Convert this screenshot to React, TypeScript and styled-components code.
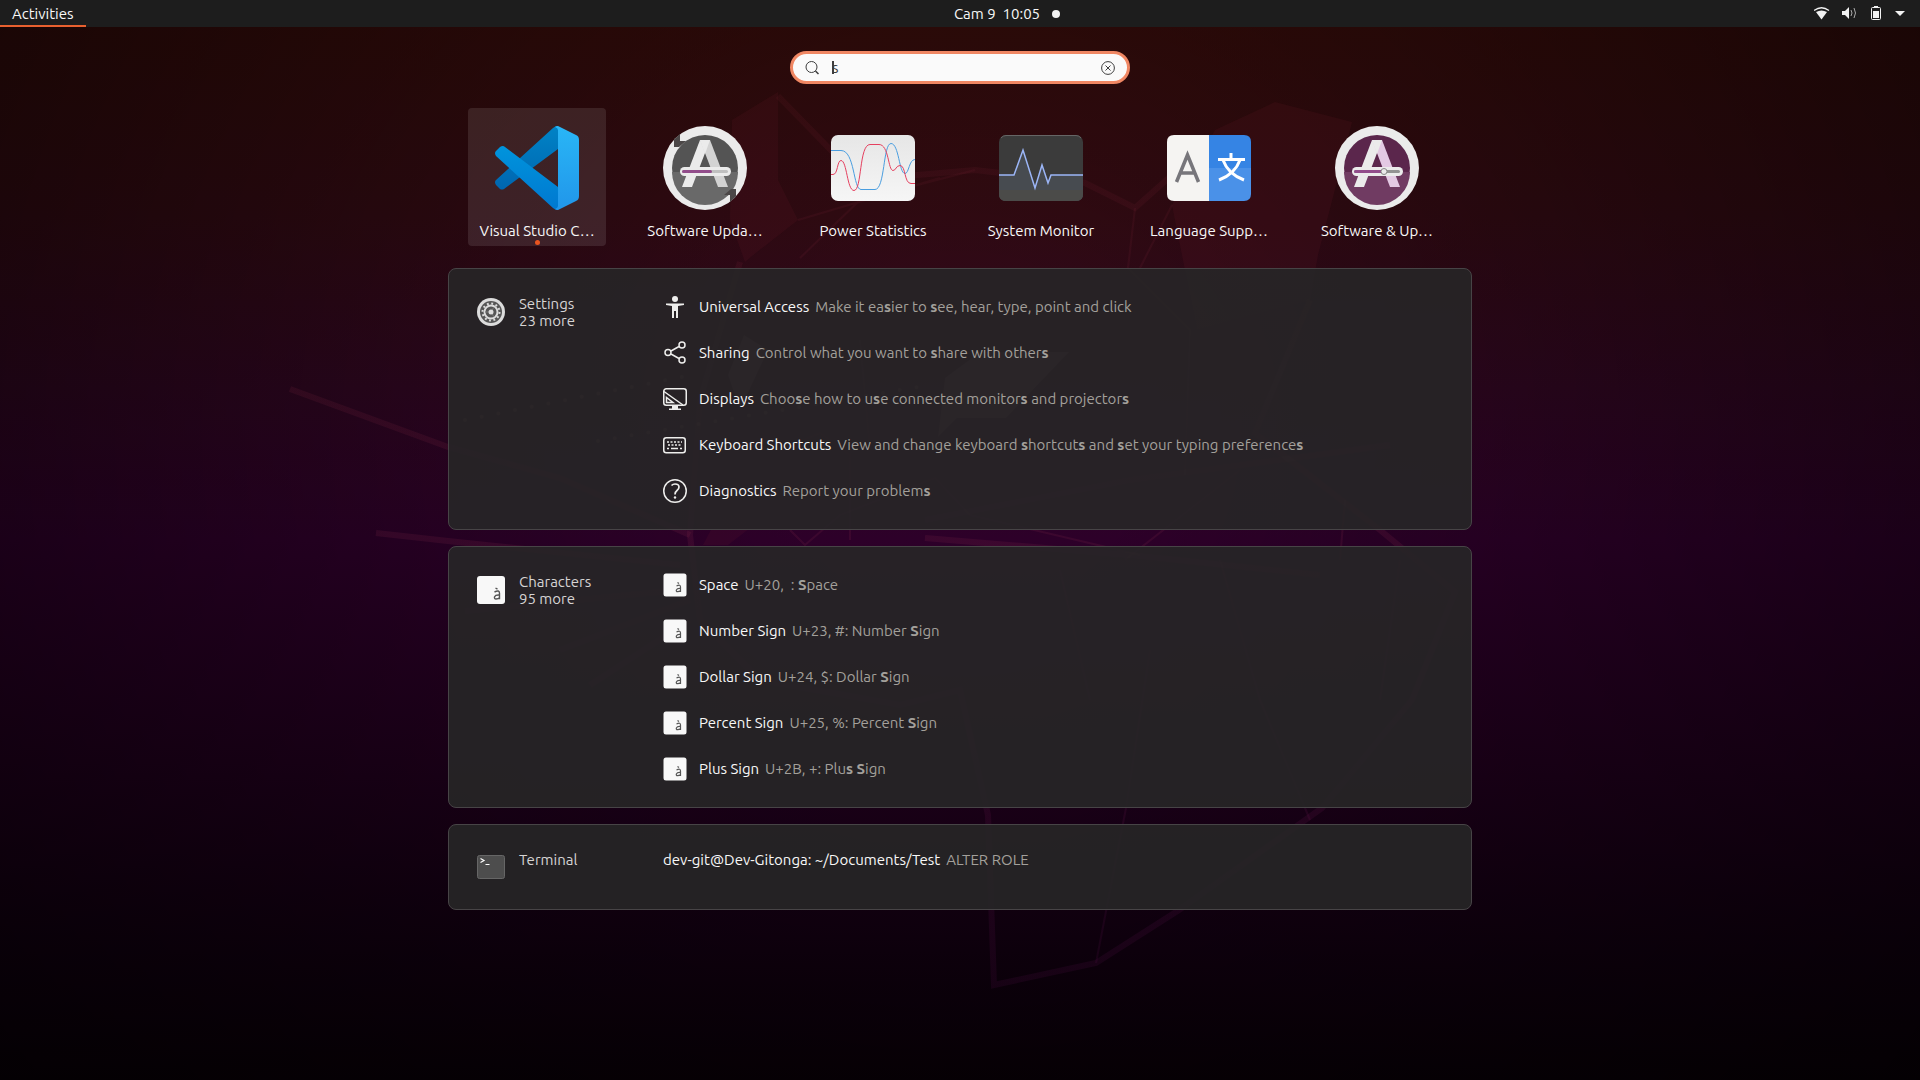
import React, { useState } from "react";
import styled, { createGlobalStyle } from "styled-components";

const Global = createGlobalStyle`
  * { box-sizing: border-box; }
  html, body, #root { margin: 0; min-height: 100vh; }
  body {
    background: #080006;
    font-family: Ubuntu, "Noto Sans", "Noto Sans CJK SC", sans-serif;
    font-size: 15px;
    line-height: 17px;
    color: #f8f8f8;
  }
  button, input { font: inherit; color: inherit; }
`;

const Desktop = styled.div`
  position: relative;
  isolation: isolate;
  min-height: 100vh;
  display: flex;
  flex-direction: column;
  background:
    radial-gradient(ellipse 60% 100% at 50% 40%, rgba(0, 0, 0, 0) 15%, rgba(0, 0, 0, 0.5) 100%),
    linear-gradient(180deg, #300b08 0%, #300a12 20%, #2e0620 36%, #2d0029 50%, #1e001b 72%, #10000f 88%, #080006 100%);
`;

const WallpaperArt = styled.svg`
  position: absolute;
  inset: 0;
  width: 100%;
  height: 100%;
  z-index: -1;
`;

const TopBar = styled.header`
  display: grid;
  grid-template-columns: 1fr auto 1fr;
  height: 27px;
  background: #1d1d1d;
`;

const BarButton = styled.button<{ $active?: boolean }>`
  justify-self: start;
  display: flex;
  align-items: center;
  gap: 12px;
  height: 27px;
  padding: 0 12px;
  border: 0;
  background: none;
  box-shadow: ${(p) => (p.$active ? "inset 0 -2px #e9602f" : "none")};
`;

const ClockButton = styled(BarButton)`
  padding: 0 0 0 94px;
`;

const Dot = styled.span`
  width: 8px;
  height: 8px;
  border-radius: 50%;
  background: #f2f2f2;
`;

const StatusButton = styled(BarButton)`
  justify-self: end;
`;

const Overview = styled.main`
  display: flex;
  flex-direction: column;
  align-items: center;
  padding: 24px 16px;
`;

const SearchBox = styled.form`
  display: flex;
  align-items: center;
  gap: 13px;
  width: 340px;
  max-width: 100%;
  height: 33px;
  padding: 0 12px;
  border: 3px solid #f08763;
  border-radius: 17px;
  background: #fafafa;
  color: #3d3d3d;
`;

const SearchInput = styled.input`
  flex: 1;
  min-width: 0;
  padding: 0;
  border: 0;
  outline: 0;
  background: linear-gradient(#3d3d3d, #3d3d3d) 0 50% / 2px 13px no-repeat;
`;

const ClearButton = styled.button`
  display: flex;
  padding: 0;
  border: 0;
  background: none;
`;

const Results = styled.div`
  display: flex;
  flex-direction: column;
  gap: 16px;
  width: 100%;
  max-width: 1024px;
  padding-top: 24px;
`;

const AppGrid = styled.nav`
  display: flex;
  flex-wrap: wrap;
  gap: 30px;
  padding: 0 20px 6px;
`;

const AppTile = styled.button<{ $selected?: boolean }>`
  display: flex;
  flex-direction: column;
  align-items: center;
  gap: 12px;
  width: 138px;
  height: 138px;
  padding: 18px 8px 0;
  border: 0;
  border-radius: 4px;
  background: ${(p) => (p.$selected ? "rgba(255, 255, 255, 0.1)" : "none")};

  svg { flex: none; }
`;

const AppLabel = styled.span`
  max-width: 100%;
  white-space: nowrap;
`;

const RunningDot = styled.span`
  flex: none;
  width: 5px;
  height: 5px;
  margin-top: -11px;
  border-radius: 50%;
  background: #e95420;
`;

const Panel = styled.section`
  display: flex;
  min-height: 86px;
  padding: 15px 28px;
  border: 1px solid #474446;
  border-radius: 8px;
  background: rgba(39, 37, 39, 0.91);
`;

const Provider = styled.button`
  flex: 0 0 186px;
  display: flex;
  align-items: flex-start;
  gap: 14px;
  padding: 12px 0;
  border: 0;
  background: none;
  text-align: left;
  color: #d6d4d4;
`;

const ProviderText = styled.span`
  display: flex;
  flex-direction: column;
  margin-top: -1px;
`;

const ResultList = styled.ul`
  flex: 1;
  min-width: 0;
  margin: 0;
  padding: 0;
  list-style: none;
`;

const ResultButton = styled.button<{ $compact?: boolean }>`
  display: flex;
  align-items: center;
  gap: 12px;
  width: 100%;
  min-height: ${(p) => (p.$compact ? "40px" : "46px")};
  padding: 0;
  border: 0;
  background: none;
  text-align: left;
`;

const ResultText = styled.span`
  display: flex;
  flex-wrap: wrap;
  column-gap: 6px;
  padding-bottom: 2px;
`;

const Description = styled.span`
  color: #a3a09b;
  white-space: pre-wrap;
  b { font-weight: 700; }
`;

function Wallpaper() {
  return (
    <WallpaperArt viewBox="0 0 1920 1080" preserveAspectRatio="xMidYMid slice" aria-hidden="true">
      <defs>
        <linearGradient id="strokeFade" gradientUnits="userSpaceOnUse" x1="0" y1="90" x2="0" y2="1000">
          <stop stopColor="#7a2030" stopOpacity="0.12" />
          <stop offset="0.5" stopColor="#802848" stopOpacity="0.18" />
          <stop offset="1" stopColor="#6a1060" stopOpacity="0.13" />
        </linearGradient>
      </defs>
      <g fill="#7a2030" fillOpacity="0.12">
        <path d="M732 120 778 92 778 180 798 220 752 256 745 262 730 220z" />
        <path d="M1215 130 1275 102 1352 122 1340 170 1318 255 1310 300 1197 330 1183 260 1172 205z" />
        <path d="M703 545 715 522 740 512 750 528 728 545z" />
      </g>
      <g fill="#c08090" fillOpacity="0.24">
        <path d="M945 378 980 352 1069 352 1006 418 957 418 938 437z" />
        <path d="M744 335 728 375 740 410 768 350z" />
      </g>
      <g fill="none" stroke="#c09080" strokeOpacity="0.25" strokeWidth="4" strokeLinecap="round" strokeDasharray="0 17">
        <path d="M465 420 697 374" />
        <path d="M598 441 930 385" />
      </g>
      <g fill="none" stroke="url(#strokeFade)" strokeWidth="6">
        <path d="M778 96 860 180 975 170 1085 183 1135 208 1172 175" />
        <path d="M290 389 448 447 560 478 690 535" />
        <path d="M376 533 448 541 680 565" />
        <path d="M740 262 700 400 690 535 700 620 760 680 900 705 960 690 988 815 994 985 1096 963 1179 910 1322 808 1412 700 1455 592 1380 530 1255 433 1310 300" />
        <path d="M925 538 1140 556 1320 575" />
        <path d="M925 520 1130 480 1390 445" />
        <path d="M560 650 690 600M590 685 690 620M465 611 680 590" />
      </g>
      <g fill="none" stroke="url(#strokeFade)" strokeWidth="2">
        <path d="M798 220 940 178M800 258 860 200 975 170M1135 208 1128 268 1190 330 1185 475M1172 205 1140 268" />
        <path d="M780 450 820 433 850 455 850 540M870 450 860 340M1096 963 1126 808 1150 650M1125 560 1240 470M1340 560 1345 500" />
        <path d="M790 530 805 545 840 515 935 478 970 515 1140 555M1060 570 1090 700M1220 560 1260 700 1310 820M1400 560 1380 700" />
      </g>
    </WallpaperArt>
  );
}

function VsCodeIcon() {
  return (
    <svg width="84" height="84" viewBox="0 0 84 84" aria-hidden="true">
      <defs>
        <linearGradient id="vsBand" x1="0" y1="0" x2="0" y2="1"><stop stopColor="#29b6f6" /><stop offset="1" stopColor="#2196ea" /></linearGradient>
        <linearGradient id="vsDown" x1="0" y1="0" x2="0" y2="1"><stop stopColor="#0094dc" /><stop offset="1" stopColor="#0078d0" /></linearGradient>
        <linearGradient id="vsUp" x1="0" y1="1" x2="0" y2="0"><stop stopColor="#0066b0" /><stop offset="1" stopColor="#0083c6" /></linearGradient>
      </defs>
      <path fill="url(#vsUp)" d="M1 54 58 2q2-2 5-2v23L9 63q-2 1-4 0l-4-4q-2-3 0-5z" />
      <path fill="url(#vsDown)" d="M1 30q-2-3 0-5l4-4q3-2 5 0l53 40v23q-3 0-5-2z" />
      <path fill="url(#vsBand)" d="M63 0 81 9q3 1 3 5v56q0 4-3 5L63 84q-2 0-3-1 3-1 3-3V4q0-2-3-3 1-1 3-1z" />
    </svg>
  );
}

function SoftwareIcon({ updater }: { updater?: boolean }) {
  const dark = updater ? "#545454" : "#5b264c";
  const light = updater ? "#696969" : "#703b62";
  return (
    <svg width="84" height="84" viewBox="0 0 84 84" aria-hidden="true">
      <circle cx="42" cy="42" r="42" fill="#ebebeb" />
      <circle cx="42" cy="42" r="33" fill={dark} />
      <path d="M9 46h66a33 33 0 0 1-66 0z" fill={light} />
      {updater && (
        <>
          <path d="M11 13.500 17 8v7h6l-7 6h-5z" fill="#4b4747" />
          <path d="M73 70.500 67 76v-7h-6l7-6h5z" fill="#4b4747" />
        </>
      )}
      <path d="M37 14h10L29 61H19z" fill="#ebebeb" />
      <path d="M37 14h10l18 47H55z" fill={updater ? "#d3d3d3" : "#e3c9e3"} />
      <path d="M37 14h10l-5 14z" fill="#ebebeb" />
      <rect x="17" y="41" width="51" height="9" rx="4.5" fill="#ebebeb" />
      <rect x="19" y="44" width="46" height="3" rx="1.5" fill={updater ? "#c0c0c0" : "#939393"} />
      <rect x="19" y="44" width="30" height="3" rx="1.5" fill="#924d8b" />
      {!updater && <circle cx="49" cy="45.500" r="3" fill="#ebebeb" stroke="#888" />}
    </svg>
  );
}

function PowerIcon() {
  return (
    <svg width="84" height="84" viewBox="0 0 84 84" aria-hidden="true">
      <defs>
        <linearGradient id="powerBody" x1="0" y1="0" x2="0" y2="1"><stop stopColor="#e6e6e6" /><stop offset="1" stopColor="#f6f6f6" /></linearGradient>
      </defs>
      <rect y="9" width="84" height="66" rx="7" fill="url(#powerBody)" />
      <g fill="none" strokeWidth="1">
        <path stroke="#4a9ee0" d="M0 24.500h10c14 0 12 39 20 39h14c10 0 8-46 16-46s8 30 14 30c4 0 4-14 10-14" />
        <path stroke="#e5405f" d="M0 48.500h2c5 0 4-14 8-14 6 0 6 30 13 30 8 0 5-46 16-46h9c10 0 9 26 14 26 3 0 3-5 7-5 6 0 4 18 11 18h4" />
      </g>
    </svg>
  );
}

function MonitorIcon() {
  return (
    <svg width="84" height="84" viewBox="0 0 84 84" aria-hidden="true">
      <rect y="9" width="84" height="66" rx="7" fill="#3b3b3b" />
      <path d="M0 49h15l9-25 12 38 7-23 6 18 3-8h32v19q0 7-7 7H7q-7 0-7-7z" fill="#474b50" />
      <path d="M0 64h84v4q0 7-7 7H7q-7 0-7-7z" fill="#4b4b49" />
      <path d="M0 49h15l9-25 12 38 7-23 6 18 3-8h32" fill="none" stroke="#9cb6f7" strokeWidth="1.500" />
      <path d="M2 12q2-2.500 5-2.500h70q3 0 5 2.500" fill="none" stroke="#666" />
    </svg>
  );
}

function LanguageIcon() {
  return (
    <svg width="84" height="84" viewBox="0 0 84 84" aria-hidden="true">
      <path d="M42 9H7q-7 0-7 7v52q0 7 7 7h35z" fill="#f5f4f2" />
      <path d="M42 9h35q7 0 7 7v26H42z" fill="#3584e4" />
      <path d="M42 42h42v26q0 7-7 7H42z" fill="#4a91e8" />
      <path d="M9.500 56 20.500 29 31.500 56M13 47h15" fill="none" stroke="#77767b" strokeWidth="3.500" />
      <path d="M64 27v6M51 33.500h27M56 34q5 14 21 20M73 34Q68 48 52 54" fill="none" stroke="#fff" strokeWidth="3" />
    </svg>
  );
}

function SettingsIcon() {
  return (
    <svg width="28" height="30" viewBox="0 0 28 30" aria-hidden="true">
      <circle cx="14" cy="16" r="14" fill="#dcdcdc" />
      <circle cx="14" cy="16" r="11" fill="#555" />
      <circle cx="14" cy="16" r="8.500" fill="none" stroke="#dcdcdc" strokeWidth="2" strokeDasharray="1.900 2.550" />
      <circle cx="14" cy="16" r="6.500" fill="none" stroke="#dcdcdc" strokeWidth="2" />
      <path d="M14 16H8M14 16l3-5M14 16l3 5" stroke="#777" />
      <circle cx="14" cy="16" r="2.500" fill="#dcdcdc" />
    </svg>
  );
}

const CharacterTile = () => (
  <>
    <rect x="0.500" y="0.500" width="23" height="23" rx="2.500" fill="#f8f8f8" />
    <path d="M13.500 13q4-2 4 1v5M17.500 15.500c-5-.5-5 3.200-3 3.200 1 0 2 0 3-1M14.500 9.500l1.500 1" fill="none" stroke="#555" strokeWidth="1.200" />
  </>
);

const CharacterIcon = () => (
  <svg width="24" height="24" viewBox="0 0 24 24" aria-hidden="true">
    <CharacterTile />
  </svg>
);

const CharactersAppIcon = () => (
  <svg width="28" height="30" viewBox="0 0 28 30" aria-hidden="true">
    <rect y="2" width="28" height="28" rx="3" fill="#f8f8f8" />
    <path d="M17.500 18q5-2.500 5 1.200v6M22.500 21c-6-.6-6 4-3.500 4 1.200 0 2.500 0 3.500-1.200M18.500 14l2 1.200" fill="none" stroke="#555" strokeWidth="1.400" />
  </svg>
);

function TerminalIcon() {
  return (
    <svg width="28" height="30" viewBox="0 0 28 30" aria-hidden="true">
      <rect x="0.500" y="3.500" width="27" height="23" rx="2" fill="#4d4d4d" stroke="#666" />
      <path d="M3.500 6.500 7 8.500 3.500 10.500M8.500 12.500h4" fill="none" stroke="#fff" strokeWidth="1.200" />
    </svg>
  );
}

const line = { width: 24, height: 24, viewBox: "0 0 24 24", fill: "none", stroke: "#eeeeec", strokeWidth: 1.5, "aria-hidden": true } as const;

const AccessIcon = () => (
  <svg {...line} stroke="none" fill="#eeeeec">
    <circle cx="12" cy="4" r="3" />
    <path d="M3 8.500h18V10l-6 1v12h-2v-7h-2v7H9V11L3 10z" />
  </svg>
);
const ShareIcon = () => (
  <svg {...line}>
    <circle cx="5" cy="11.500" r="3" /><circle cx="19" cy="4" r="3" /><circle cx="19" cy="19" r="3" />
    <path d="M8 10 16 5.500M8 13 16 17.500" />
  </svg>
);
const DisplayIcon = () => (
  <svg {...line}>
    <rect x="0.750" y="1.750" width="22.500" height="16.500" rx="2.500" />
    <path d="M1 4.500 20 18M3.500 10.500v5H10z" />
    <path d="M9 18.500h6v3h3V23H6v-1.500h3z" fill="#eeeeec" stroke="none" />
  </svg>
);
const KeyboardIcon = () => (
  <svg {...line}>
    <rect x="0.750" y="4.750" width="21.500" height="15" rx="2.500" />
    <path d="M4 9h15M5 12h14" strokeDasharray="2 1.500" />
    <path d="M4 15.500h2M8 15.500h7M17 15.500h2" />
  </svg>
);
const HelpIcon = () => (
  <svg {...line}>
    <circle cx="12" cy="12" r="11.250" />
    <path d="M8.500 6.500Q10 5 12 5q4 0 4 3 0 2-2 3.500t-2 4" strokeWidth="1.700" />
    <circle cx="12" cy="18.500" r="1.200" fill="#eeeeec" stroke="none" />
  </svg>
);

const apps = [
  { name: "Visual Studio C…", icon: <VsCodeIcon />, running: true },
  { name: "Software Upda…", icon: <SoftwareIcon updater /> },
  { name: "Power Statistics", icon: <PowerIcon /> },
  { name: "System Monitor", icon: <MonitorIcon /> },
  { name: "Language Supp…", icon: <LanguageIcon /> },
  { name: "Software & Up…", icon: <SoftwareIcon /> },
];

type Result = { title: string; icon?: React.ReactNode; text: React.ReactNode };
type Group = { name: string; more?: string; icon: React.ReactNode; results: Result[] };

const groups: Group[] = [
  {
    name: "Settings",
    more: "23 more",
    icon: <SettingsIcon />,
    results: [
      { title: "Universal Access", icon: <AccessIcon />, text: <>Make it ea<b>s</b>ier to <b>s</b>ee, hear, type, point and click</> },
      { title: "Sharing", icon: <ShareIcon />, text: <>Control what you want to <b>s</b>hare with other<b>s</b></> },
      { title: "Displays", icon: <DisplayIcon />, text: <>Choo<b>s</b>e how to u<b>s</b>e connected monitor<b>s</b> and projector<b>s</b></> },
      { title: "Keyboard Shortcuts", icon: <KeyboardIcon />, text: <>View and change keyboard <b>s</b>hortcut<b>s</b> and <b>s</b>et your typing preference<b>s</b></> },
      { title: "Diagnostics", icon: <HelpIcon />, text: <>Report your problem<b>s</b></> },
    ],
  },
  {
    name: "Characters",
    more: "95 more",
    icon: <CharactersAppIcon />,
    results: [
      { title: "Space", icon: <CharacterIcon />, text: <>U+20,  : <b>S</b>pace</> },
      { title: "Number Sign", icon: <CharacterIcon />, text: <>U+23, #: Number <b>S</b>ign</> },
      { title: "Dollar Sign", icon: <CharacterIcon />, text: <>U+24, $: Dollar <b>S</b>ign</> },
      { title: "Percent Sign", icon: <CharacterIcon />, text: <>U+25, %: Percent <b>S</b>ign</> },
      { title: "Plus Sign", icon: <CharacterIcon />, text: <>U+2B, +: Plu<b>s</b> <b>S</b>ign</> },
    ],
  },
  {
    name: "Terminal",
    icon: <TerminalIcon />,
    results: [{ title: "dev-git@Dev-Gitonga: ~/Documents/Test", text: "ALTER ROLE" }],
  },
];

export default function App() {
  const [query, setQuery] = useState("s");
  return (
    <Desktop>
      <Global />
      <Wallpaper />
      <TopBar>
        <BarButton $active>Activities</BarButton>
        <ClockButton>
          <span>Cam 9&nbsp; 10:05</span>
          <Dot />
        </ClockButton>
        <StatusButton aria-label="System menu">
          <svg width="94" height="16" viewBox="1 1 94 16" fill="#f2f2f2" aria-hidden="true">
            <path d="M3 7Q8.500 4 14 7L8.500 14.500z" />
            <path d="M1 5.500Q8.500 0 16 5.500" fill="none" stroke="#f2f2f2" strokeWidth="1.300" />
            <path d="M29 6h3l4-4v12l-4-4h-3z" />
            <path d="M38 5q2 3 0 6M41 3q3 5 0 10" fill="none" stroke="#aaa" />
            <path d="M61 1h4v1.500h-4zM60 6h6v7h-6z" />
            <rect x="58.500" y="2.500" width="9" height="12" rx="1" fill="none" stroke="#f2f2f2" />
            <path d="M82 6h10l-5 5z" />
          </svg>
        </StatusButton>
      </TopBar>
      <Overview>
        <SearchBox role="search" onSubmit={(e) => e.preventDefault()}>
          <svg width="14" height="14" viewBox="0 0 14 14" fill="none" stroke="#3d3d3d" aria-hidden="true">
            <circle cx="6.500" cy="6" r="5.500" />
            <path d="M10.500 10 13.500 13" strokeWidth="1.500" />
          </svg>
          <SearchInput aria-label="Type to search" value={query} onChange={(e) => setQuery(e.target.value)} />
          <ClearButton type="button" aria-label="Clear" onClick={() => setQuery("")}>
            <svg width="14" height="14" viewBox="0 0 14 14" fill="none" stroke="#3d3d3d" aria-hidden="true">
              <circle cx="7" cy="7" r="6.400" />
              <path d="M4.500 4.500 9.500 9.500M9.500 4.500 4.500 9.500" />
            </svg>
          </ClearButton>
        </SearchBox>
        <Results>
          <AppGrid aria-label="Applications">
            {apps.map((a) => (
              <AppTile key={a.name} $selected={a.running}>
                {a.icon}
                <AppLabel>{a.name}</AppLabel>
                {a.running && <RunningDot />}
              </AppTile>
            ))}
          </AppGrid>
          {groups.map((g) => (
            <Panel key={g.name} aria-label={g.name}>
              <Provider>
                {g.icon}
                <ProviderText>
                  <span>{g.name}</span>
                  {g.more && <span>{g.more}</span>}
                </ProviderText>
              </Provider>
              <ResultList>
                {g.results.map((r) => (
                  <li key={r.title}>
                    <ResultButton $compact={!r.icon}>
                      {r.icon}
                      <ResultText>
                        <span>{r.title}</span>
                        <Description>{r.text}</Description>
                      </ResultText>
                    </ResultButton>
                  </li>
                ))}
              </ResultList>
            </Panel>
          ))}
        </Results>
      </Overview>
    </Desktop>
  );
}
